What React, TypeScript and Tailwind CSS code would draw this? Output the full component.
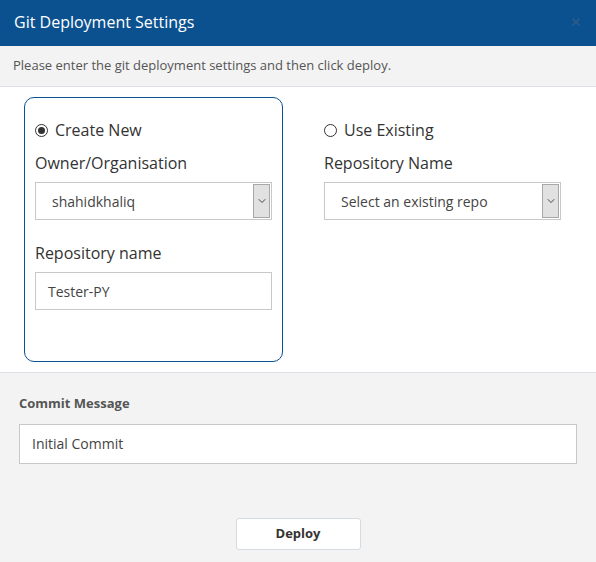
import { ChevronDown, X } from 'lucide-react'

const font = { fontFamily: '"Open Sans", "Noto Sans", sans-serif' }

function Radio({ checked, label }: { checked: boolean; label: string }) {
  return (
    <label className="flex h-[22px] items-center gap-[7px] text-[16px] text-[#333]">
      <span className="flex h-[13px] w-[13px] items-center justify-center rounded-full border border-[#333] bg-white">
        {checked ? <span className="h-[7px] w-[7px] rounded-full bg-[#333]" /> : null}
      </span>
      {label}
    </label>
  )
}

function FakeSelect({ value }: { value: string }) {
  return (
    <div className="flex h-[38px] w-[237px] items-stretch border border-[#c8c8c8] bg-white">
      <div className="flex flex-1 items-center pl-4 text-[14px] text-[#444]">{value}</div>
      <div className="my-[1px] mr-[1px] flex w-[17px] items-center justify-center border border-[#a8a8a8] bg-[#e1e1e1]">
        <ChevronDown className="h-3 w-3 text-[#333]" strokeWidth={1.75} />
      </div>
    </div>
  )
}

export default function App() {
  return (
    <div className="flex h-[562px] w-[596px] flex-col bg-[#f3f3f3]" style={font}>
      <div className="flex h-[46px] items-center justify-between bg-[#0b5190] pb-[2px] pl-[14px] pr-[14px]">
        <span className="text-[16px] text-white">Git Deployment Settings</span>
        <X className="h-3 w-3 text-[#2f5d8a]" strokeWidth={3} />
      </div>
      <div className="flex h-[41px] items-center border-b border-[#dde1e6] px-[13px] text-[13px] text-[#555]">
        Please enter the git deployment settings and then click deploy.
      </div>
      <div className="flex h-[286px] gap-[41px] border-b border-[#dde1e6] bg-white pl-[24px] pt-[10px]">
        <div className="flex h-[265px] w-[259px] flex-col rounded-[10px] border border-[#0b5190] px-[10px] pt-[21px]">
          <Radio checked label="Create New" />
          <div className="mt-[10px] h-[22px] text-[16px] text-[#333]">Owner/Organisation</div>
          <div className="mt-[9px]">
            <FakeSelect value="shahidkhaliq" />
          </div>
          <div className="mt-[21px] h-[22px] text-[16px] text-[#333]">Repository name</div>
          <div className="mt-[9px] flex h-[38px] w-[237px] items-center border border-[#c8c8c8] bg-white pl-3 text-[14px] text-[#444]">
            Tester-PY
          </div>
        </div>
        <div className="flex flex-col pt-[22px]">
          <Radio checked={false} label="Use Existing" />
          <div className="mt-[10px] h-[22px] text-[16px] text-[#333]">Repository Name</div>
          <div className="mt-[9px]">
            <FakeSelect value="Select an existing repo" />
          </div>
        </div>
      </div>
      <div className="flex flex-1 flex-col px-[19px] pt-[21px]">
        <div className="text-[13px] font-bold text-[#555]">Commit Message</div>
        <div className="mt-[10px] flex h-[40px] items-center border border-[#c8c8c8] bg-white pl-3 text-[14px] text-[#444]">
          Initial Commit
        </div>
        <div className="mt-[54px] flex justify-center">
          <button
            type="button"
            className="h-[32px] w-[125px] rounded-[3px] border border-[#d5dbe3] bg-white text-[13px] font-bold text-[#333]"
          >
            Deploy
          </button>
        </div>
      </div>
    </div>
  )
}
